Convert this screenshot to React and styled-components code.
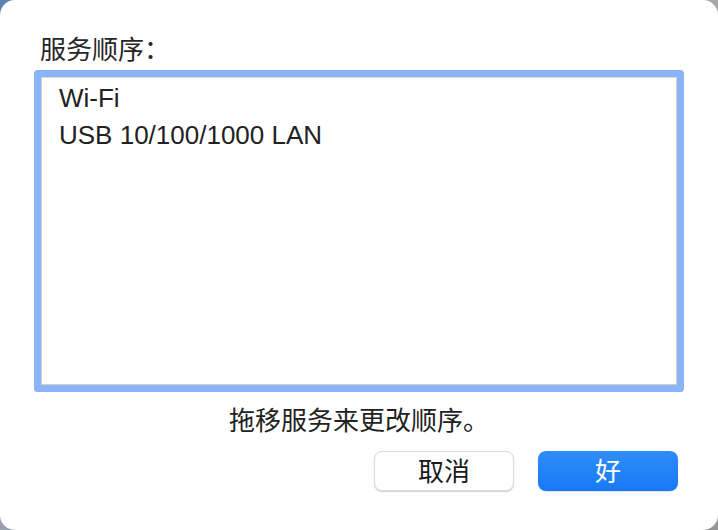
import React from "react"
import styled, { createGlobalStyle } from "styled-components"

const GlobalStyle = createGlobalStyle`
  html, body {
    margin: 0;
    padding: 0;
    width: 718px;
    height: 530px;
    overflow: hidden;
    background: linear-gradient(135deg, #5d7fb9 0%, #8d9bb4 30%, #a8a8a8 60%, #959595 100%);
  }
`

const cjk = `"Noto Sans CJK SC", "Liberation Sans", sans-serif`
const latin = `"Liberation Sans", "Noto Sans CJK SC", sans-serif`

const Sheet = styled.div`
  box-sizing: border-box;
  width: 718px;
  height: 530px;
  display: flex;
  flex-direction: column;
  padding: 30px 34px 0;
  background: #ffffff;
  border-radius: 15px;
`

const Label = styled.div`
  margin-left: 6px;
  font-family: ${cjk};
  font-size: 26px;
  line-height: 36px;
  color: #262626;
`

const ServiceList = styled.ul`
  box-sizing: border-box;
  list-style: none;
  margin: 11px 7px 0;
  padding: 2px 0 0 17px;
  height: 308px;
  border: 1px solid #cfcfcf;
  border-top-color: #d9d9d9;
  background: #ffffff;
  box-shadow: 0 0 0 7px #8ab4f7;
  border-radius: 1px;
`

const ServiceRow = styled.li`
  font-family: ${latin};
  font-size: 26px;
  line-height: 37px;
  color: #222222;
`

const Hint = styled.div`
  margin-top: 16px;
  text-align: center;
  font-family: ${cjk};
  font-size: 26px;
  line-height: 36px;
  color: #222222;
`

const ButtonRow = styled.div`
  display: flex;
  justify-content: flex-end;
  gap: 24px;
  margin: 14px 6px 0 0;
`

const Button = styled.button`
  box-sizing: border-box;
  width: 140px;
  height: 40px;
  padding: 0 0 2px;
  border-radius: 8px;
  font-family: ${cjk};
  font-size: 26px;
  line-height: 36px;
  cursor: default;
  color: ${(p) => (p.$primary ? "#ffffff" : "#1a1a1a")};
  background: ${(p) =>
    p.$primary
      ? "linear-gradient(180deg, #2f8df8 0%, #167af6 100%)"
      : "#ffffff"};
  border: ${(p) => (p.$primary ? "none" : "1px solid #dadada")};
  box-shadow: ${(p) =>
    p.$primary
      ? "0 1px 1px rgba(0, 0, 0, 0.12)"
      : "0 1px 1.5px rgba(0, 0, 0, 0.18)"};
`

const services = ["Wi-Fi", "USB 10/100/1000 LAN"]

const App = () => {
  return (
    <>
      <GlobalStyle />
      <Sheet>
        <Label>服务顺序：</Label>
        <ServiceList>
          {services.map((name) => (
            <ServiceRow key={name}>{name}</ServiceRow>
          ))}
        </ServiceList>
        <Hint>拖移服务来更改顺序。</Hint>
        <ButtonRow>
          <Button>取消</Button>
          <Button $primary>好</Button>
        </ButtonRow>
      </Sheet>
    </>
  )
}

export default App
